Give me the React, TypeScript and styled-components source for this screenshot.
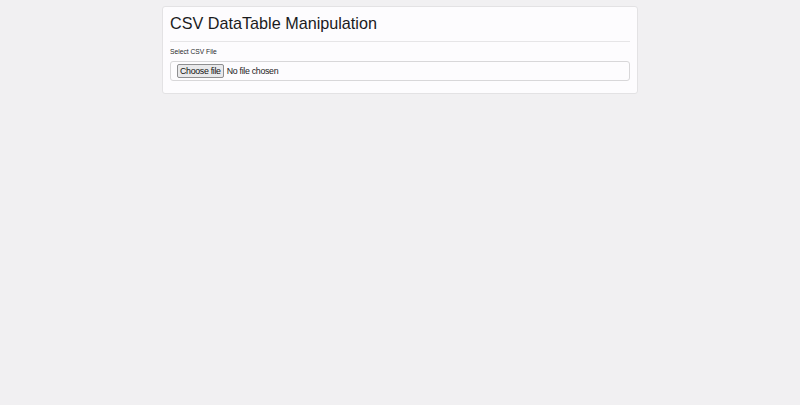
import React from "react";
import styled, { createGlobalStyle } from "styled-components";

const Global = createGlobalStyle`
  html, body { margin: 0; padding: 0; background: #f1f0f2; }
  body { font-family: "Liberation Sans", Arial, sans-serif; color: #212529; }
  #root { min-height: 405px; }
`;

const Page = styled.div`
  display: flex;
  justify-content: center;
  align-items: flex-start;
  padding-top: 6px;
  min-height: 405px;
  box-sizing: border-box;
`;

const Card = styled.div`
  width: 476px;
  box-sizing: border-box;
  background: #fdfcfe;
  border: 1px solid #e3e2e4;
  border-radius: 3px;
  padding: 7px 7px 12px 7px;
`;

const Title = styled.h1`
  margin: 0;
  font-size: 16.2px;
  font-weight: 400;
  line-height: 19px;
  padding-bottom: 8px;
  border-bottom: 1px solid #e6e5e7;
  color: #1b1b1d;
`;

const Field = styled.div`
  display: flex;
  flex-direction: column;
  gap: 5px;
  padding-top: 5px;
`;

const Label = styled.label`
  font-size: 6.7px;
  color: #2a2a2c;
  line-height: 9px;
`;

const FileBox = styled.div`
  display: flex;
  align-items: center;
  gap: 3px;
  height: 20px;
  box-sizing: border-box;
  border: 1px solid #d8d7d9;
  border-radius: 3px;
  background: #fdfcfe;
  padding: 0 6px;
`;

const FileButton = styled.span`
  display: inline-flex;
  align-items: center;
  height: 14px;
  padding: 0 2px;
  box-sizing: border-box;
  border: 1px solid #8e8e90;
  border-radius: 2px;
  background: #e9e9eb;
  font-size: 8.8px;
  letter-spacing: -0.3px;
  color: #111;
`;

const FileText = styled.span`
  font-size: 8.8px;
  letter-spacing: -0.3px;
  color: #1b1b1d;
`;

export default function App() {
  return (
    <>
      <Global />
      <Page>
        <Card>
          <Title>CSV DataTable Manipulation</Title>
          <Field>
            <Label>Select CSV File</Label>
            <FileBox>
              <FileButton>Choose file</FileButton>
              <FileText>No file chosen</FileText>
            </FileBox>
          </Field>
        </Card>
      </Page>
    </>
  );
}
